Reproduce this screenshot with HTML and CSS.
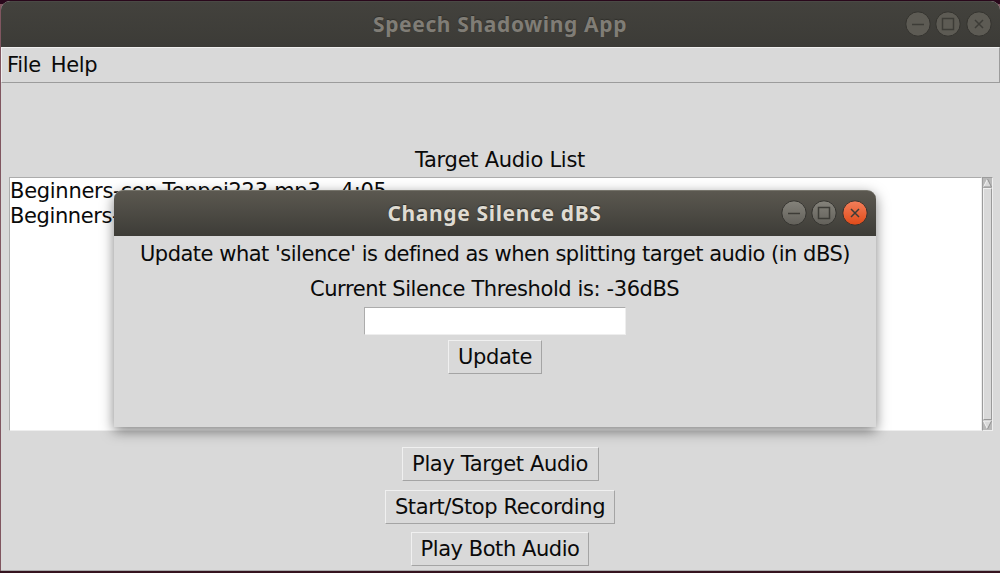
FILE: index.html
```
<!DOCTYPE html>
<html lang="en">
<head>
<meta charset="utf-8">
<title>Speech Shadowing App</title>
<link rel="stylesheet" href="styles.css">
</head>
<body>
<div class="window">
  <header class="titlebar">
    <h1 class="title main-title"><span>Speech Shadowing App</span></h1>
    <div class="controls">
      <svg class="control" viewBox="0 0 26 26"><circle cx="13" cy="13" r="12.2"/><path d="M7 13.5h12"/></svg>
      <svg class="control" viewBox="0 0 26 26"><circle cx="13" cy="13" r="12.2"/><path d="M7.5 7.5h11v11h-11z"/></svg>
      <svg class="control" viewBox="0 0 26 26"><circle cx="13" cy="13" r="12.2"/><path d="M9 9l8 8M17 9l-8 8"/></svg>
    </div>
  </header>
  <nav class="menubar"><span class="file">File</span><span class="help">Help</span></nav>
  <main class="content">
    <h2 class="list-title"><span>Target Audio List</span></h2>
    <div class="list-row">
      <div class="listbox">
        <div class="item"><span class="item-text">Beginners-con-Teppei223.mp3 - 4:05</span></div>
        <div class="item short"><span>Beginners-</span></div>
      </div>
      <div class="scrollbar">
        <svg class="arrow" viewBox="0 0 9 10"><path class="face" d="M4.5 1L8.5 9H.5z"/><path class="light" d="M.5 9L4.5 1"/><path class="dark" d="M.5 9h8L4.5 1"/></svg>
        <div class="thumb"></div>
        <svg class="arrow" viewBox="0 0 9 10"><path class="face" d="M4.5 9L.5 1h8z"/><path class="light" d="M4.5 9L.5 1h8"/><path class="dark" d="M8.5 1L4.5 9"/></svg>
      </div>
    </div>
    <div class="actions">
      <button class="button play-target"><span>Play Target Audio</span></button>
      <button class="button record"><span>Start/Stop Recording</span></button>
      <button class="button play-both"><span>Play Both Audio</span></button>
    </div>
  </main>
</div>
<section class="dialog">
  <header class="titlebar dialog-bar">
    <h2 class="title dialog-title"><span>Change Silence dBS</span></h2>
    <div class="controls">
      <svg class="control" viewBox="0 0 26 26"><defs><linearGradient id="gray" x2="0" y2="1"><stop stop-color="#85837b"/><stop offset="1" stop-color="#62605a"/></linearGradient><linearGradient id="orange" x2="0" y2="1"><stop stop-color="#f37f5b"/><stop offset="1" stop-color="#e04a18"/></linearGradient></defs><circle fill="url(#gray)" cx="13" cy="13" r="12.2"/><path d="M7 13.5h12"/></svg>
      <svg class="control" viewBox="0 0 26 26"><circle fill="url(#gray)" cx="13" cy="13" r="12.2"/><path d="M7.5 7.5h11v11h-11z"/></svg>
      <svg class="control" viewBox="0 0 26 26"><circle fill="url(#orange)" cx="13" cy="13" r="12.2"/><path d="M9 9l8 8M17 9l-8 8"/></svg>
    </div>
  </header>
  <div class="dialog-body">
    <p class="hint"><span>Update what 'silence' is defined as when splitting target audio (in dBS)</span></p>
    <p class="threshold"><span>Current Silence Threshold is: -36dBS</span></p>
    <input class="entry" type="text" aria-label="Silence threshold">
    <button class="button update"><span>Update</span></button>
  </div>
</section>
</body>
</html>
```
FILE: styles.css
```
* { box-sizing: border-box; }
body {
  margin: 0;
  width: 1000px;
  height: 573px;
  overflow: hidden;
  padding: 1px 0 2px 1px;
  background: linear-gradient(#29081b 0, #29081b 4px, transparent 4px, transparent 571px, #35141f 571px), #805660;
  font: 21px/26px "DejaVu Sans", sans-serif;
  letter-spacing: -.35px;
  color: #0a0a0a;
}
h1, h2, p { margin: 0; font-weight: normal; font-size: inherit; white-space: nowrap; }
.window {
  display: flex;
  flex-direction: column;
  height: 570px;
  border-radius: 9px 9px 0 0;
  overflow: hidden;
  background: #d9d9d9;
  border-bottom: 1px solid #aaa;
}
.titlebar {
  flex: none;
  display: grid;
  grid-template-columns: 1fr auto;
  align-items: center;
  height: 46px;
  background: linear-gradient(#43423d, #3c3b37);
  border-top: 1px solid #4a4945;
}
.title {
  grid-area: 1 / 1 / 2 / 3;
  text-align: center;
  font: bold 21px/26px "Noto Sans", sans-serif;
  letter-spacing: .64px;
  padding: 0 1px 2px 0;
  color: #807d76;
  text-shadow: 0 -1px 1px #302f2b;
}
.controls { grid-area: 1 / 2; display: flex; gap: 4.5px; padding: 0 8.5px 1px 0; }
.control { width: 26px; height: 26px; fill: #5d5b54; stroke: #34332f; stroke-width: 1; }
.control path { fill: none; stroke: #3d3c37; stroke-width: 1.5; }
.menubar {
  flex: none;
  display: flex;
  gap: 10px;
  height: 36px;
  padding: 4px 5px;
  border: 1px solid;
  border-color: #efefef #9c9c9c #9c9c9c #efefef;
}
.content { display: flex; flex-direction: column; padding: 64px 7px 0 8px; }
.list-title { text-align: center; height: 30px; padding-right: 2px; letter-spacing: -.27px; }
.list-row { display: flex; height: 254px; }
.listbox {
  flex: 1;
  background: #fff;
  border: 1px solid;
  border-color: #acacac #eee #eee #acacac;
}
.item { height: 25px; line-height: 27px; white-space: nowrap; letter-spacing: -.28px; }
.short { letter-spacing: -.4px; }
.scrollbar {
  width: 11px;
  display: flex;
  flex-direction: column;
  background: #b8b8b8;
  border: 1px solid;
  border-color: #9c9c9c #eee #eee #9c9c9c;
}
.arrow { width: 9px; height: 10px; flex: none; }
.face { fill: #d9d9d9; }
.light { fill: none; stroke: #f3f3f3; }
.dark { fill: none; stroke: #8e8e8e; }
.thumb { flex: 1; background: #d9d9d9; border: 1px solid; border-color: #f0f0f0 #999 #999 #f0f0f0; }
.actions { display: flex; flex-direction: column; align-items: center; gap: 8.5px; padding: 16px 2px 0 0; }
.button {
  display: flex;
  justify-content: center;
  align-items: center;
  height: 34px;
  padding: 0;
  font: inherit;
  letter-spacing: inherit;
  color: inherit;
  white-space: nowrap;
  background: #d9d9d9;
  border: 1px solid;
  border-color: #f0f0f0 #a4a4a4 #a4a4a4 #f0f0f0;
}
.play-target { width: 197px; }
.record { width: 230px; letter-spacing: -.38px; }
.play-both { width: 178px; letter-spacing: -.45px; }
.dialog {
  position: absolute;
  left: 114px;
  top: 190px;
  width: 762px;
  height: 237px;
  border-radius: 9px 9px 0 0;
  background: #d9d9d9;
  box-shadow: 0 4px 13px rgba(0, 0, 0, .5);
}
.dialog-bar {
  border-radius: 9px 9px 0 0;
  background: linear-gradient(#5b5850, #3d3c37);
  border-top-color: #76746b;
}
.dialog-title { color: #dfdbd2; }
.dialog-body { display: flex; flex-direction: column; align-items: center; padding-top: 5px; }
.hint { height: 35px; letter-spacing: -.49px; }
.threshold { height: 31px; letter-spacing: -.4px; padding-right: 1px; }
.entry { width: 262px; height: 28px; padding: 0 4px; font: inherit; background: #fff; border: 1px solid; border-color: #acacac #eee #eee #acacac; outline: 0; }
.update { width: 94px; margin-top: 5px; padding-bottom: 1px; }
```
